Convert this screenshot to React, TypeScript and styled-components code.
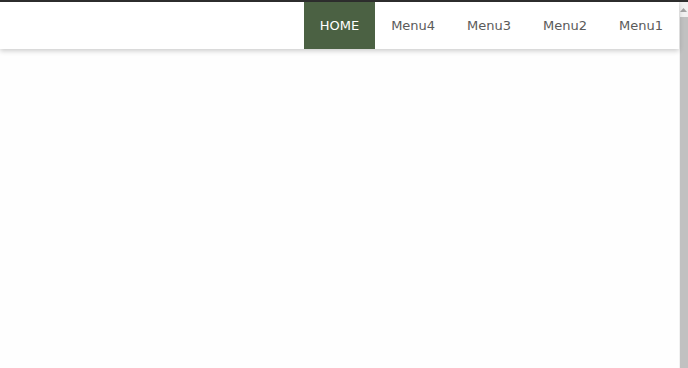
import React from "react";
import styled, { createGlobalStyle } from "styled-components";

const GlobalStyle = createGlobalStyle`
  html, body {
    margin: 0;
    padding: 0;
    height: 100%;
    overflow: hidden;
    background: #fefefe;
  }
  #root {
    height: 100%;
  }
`;

const menus = ["HOME", "Menu4", "Menu3", "Menu2", "Menu1"];

const App: React.FC = () => {
  return (
    <>
      <GlobalStyle />
      <Frame>
        <Page>
          <Header>
            <Nav>
              {menus.map((m, i) => (
                <NavItem key={m} $active={i === 0}>
                  {m}
                </NavItem>
              ))}
            </Nav>
          </Header>
          <Content />
        </Page>
        <ScrollTrack>
          <ScrollArrow>
            <svg width="7" height="4" viewBox="0 0 7 4">
              <path d="M0 4 L3.5 0 L7 4 Z" fill="#a3a3a3" />
            </svg>
          </ScrollArrow>
          <ScrollThumb />
        </ScrollTrack>
      </Frame>
    </>
  );
};

export default App;

const Frame = styled.div`
  display: flex;
  height: 100%;
  border-top: 2px solid #2e2e2e;
  box-sizing: border-box;
`;

const Page = styled.div`
  flex: 1 1 auto;
  min-width: 0;
  display: flex;
  flex-direction: column;
  background: #fefefe;
`;

const Header = styled.header`
  height: 47px;
  background: #ffffff;
  display: flex;
  justify-content: flex-end;
  box-shadow: 0 2px 5px rgba(0, 0, 0, 0.2);
  position: relative;
  z-index: 1;
`;

const Nav = styled.nav`
  display: flex;
  align-items: stretch;
`;

const NavItem = styled.a<{ $active?: boolean }>`
  display: flex;
  align-items: center;
  padding: 0 16px;
  font-family: "DejaVu Sans", "Open Sans", sans-serif;
  font-size: 13px;
  color: ${(p) => (p.$active ? "#ffffff" : "#5a5a5a")};
  background: ${(p) => (p.$active ? "#4b6143" : "transparent")};
  cursor: pointer;
`;

const Content = styled.main`
  flex: 1;
`;

const ScrollTrack = styled.div`
  width: 9px;
  min-width: 9px;
  flex-shrink: 0;
  display: flex;
  flex-direction: column;
  background: #f1f1f1;
`;

const ScrollArrow = styled.div`
  height: 15px;
  display: flex;
  align-items: center;
  justify-content: center;
`;

const ScrollThumb = styled.div`
  flex: 1;
  width: 8px;
  margin-left: 1px;
  background: #c1c1c1;
`;
